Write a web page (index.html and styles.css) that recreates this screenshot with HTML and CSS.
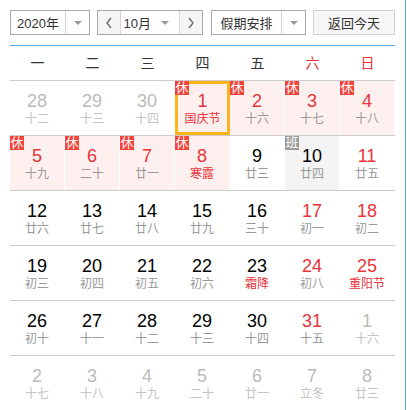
FILE: index.html
```html
<!DOCTYPE html>
<html lang="zh">
<head>
<meta charset="utf-8">
<link rel="stylesheet" href="styles.css">
</head>
<body>
<div class="frame">
  <div class="toolbar">
    <div class="select year">
      <span class="sel-text">2020年</span>
      <span class="sel-arrow"><i class="tri"></i></span>
    </div>
    <div class="month">
      <span class="nav"><svg width="8" height="12" viewBox="0 0 8 12"><path d="M6 1 L2 6 L6 11" fill="none" stroke="#666" stroke-width="1.3"/></svg></span>
      <span class="month-text">10月</span>
      <span class="month-arrow"><i class="tri"></i></span>
      <span class="nav"><svg width="8" height="12" viewBox="0 0 8 12"><path d="M2 1 L6 6 L2 11" fill="none" stroke="#666" stroke-width="1.3"/></svg></span>
    </div>
    <div class="select holiday">
      <span class="sel-text">假期安排</span>
      <span class="sel-arrow"><i class="tri"></i></span>
    </div>
    <div class="today-btn">返回今天</div>
  </div>
  <div class="rule"></div>
  <div class="weekdays">
    <span>一</span><span>二</span><span>三</span><span>四</span><span>五</span><span class="red">六</span><span class="red">日</span>
  </div>
  <div class="grid">
    <div class="row">
      <div class="cell other"><b>28</b><em>十二</em></div>
      <div class="cell other"><b>29</b><em>十三</em></div>
      <div class="cell other"><b>30</b><em>十四</em></div>
      <div class="cell rest selected"><i class="badge">休</i><b class="r">1</b><em class="r">国庆节</em></div>
      <div class="cell rest"><i class="badge">休</i><b class="r">2</b><em>十六</em></div>
      <div class="cell rest"><i class="badge">休</i><b class="r">3</b><em>十七</em></div>
      <div class="cell rest"><i class="badge">休</i><b class="r">4</b><em>十八</em></div>
    </div>
    <div class="row">
      <div class="cell rest"><i class="badge">休</i><b class="r">5</b><em>十九</em></div>
      <div class="cell rest"><i class="badge">休</i><b class="r">6</b><em>二十</em></div>
      <div class="cell rest"><i class="badge">休</i><b class="r">7</b><em>廿一</em></div>
      <div class="cell rest"><i class="badge">休</i><b class="r">8</b><em class="r">寒露</em></div>
      <div class="cell"><b>9</b><em>廿三</em></div>
      <div class="cell work"><i class="badge gray">班</i><b>10</b><em>廿四</em></div>
      <div class="cell"><b class="r">11</b><em>廿五</em></div>
    </div>
    <div class="row">
      <div class="cell"><b>12</b><em>廿六</em></div>
      <div class="cell"><b>13</b><em>廿七</em></div>
      <div class="cell"><b>14</b><em>廿八</em></div>
      <div class="cell"><b>15</b><em>廿九</em></div>
      <div class="cell"><b>16</b><em>三十</em></div>
      <div class="cell"><b class="r">17</b><em>初一</em></div>
      <div class="cell"><b class="r">18</b><em>初二</em></div>
    </div>
    <div class="row">
      <div class="cell"><b>19</b><em>初三</em></div>
      <div class="cell"><b>20</b><em>初四</em></div>
      <div class="cell"><b>21</b><em>初五</em></div>
      <div class="cell"><b>22</b><em>初六</em></div>
      <div class="cell"><b>23</b><em class="r">霜降</em></div>
      <div class="cell"><b class="r">24</b><em>初八</em></div>
      <div class="cell"><b class="r">25</b><em class="r">重阳节</em></div>
    </div>
    <div class="row">
      <div class="cell"><b>26</b><em>初十</em></div>
      <div class="cell"><b>27</b><em>十一</em></div>
      <div class="cell"><b>28</b><em>十二</em></div>
      <div class="cell"><b>29</b><em>十三</em></div>
      <div class="cell"><b>30</b><em>十四</em></div>
      <div class="cell"><b class="r">31</b><em>十五</em></div>
      <div class="cell other"><b>1</b><em>十六</em></div>
    </div>
    <div class="row">
      <div class="cell other"><b>2</b><em>十七</em></div>
      <div class="cell other"><b>3</b><em>十八</em></div>
      <div class="cell other"><b>4</b><em>十九</em></div>
      <div class="cell other"><b>5</b><em>二十</em></div>
      <div class="cell other"><b>6</b><em>廿一</em></div>
      <div class="cell other"><b>7</b><em>立冬</em></div>
      <div class="cell other"><b>8</b><em>廿三</em></div>
    </div>
  </div>
</div>
</body>
</html>
```

FILE: styles.css
```css
html, body {
  margin: 0;
  padding: 0;
  background: #fff;
  overflow: hidden;
}
body {
  font-family: "Liberation Sans", "Noto Sans CJK SC", sans-serif;
  color: #333;
}
.frame {
  width: 385px;
  height: 400px;
  padding: 10px 10px 0 10px;
  border-right: 1px solid #5aaaf2;
}
.toolbar {
  display: flex;
  height: 25px;
  font-size: 13px;
}
.select, .month, .today-btn {
  box-sizing: border-box;
  height: 25px;
  border: 1px solid #a8a8a8;
  display: flex;
  align-items: stretch;
  background: #fff;
}
.year { width: 80px; }
.holiday { width: 95px; margin-left: 8px; }
.month { width: 106px; margin-left: 7px; }
.today-btn {
  width: 82px;
  margin-left: 7px;
  border-color: #d2d2d2;
  background: #f6f6f6;
  justify-content: center;
  align-items: center;
  color: #333;
}
.sel-text {
  flex: 1;
  display: flex;
  align-items: center;
  justify-content: center;
  border-right: 1px solid #d6d6d6;
}
.sel-arrow {
  width: 23px;
  display: flex;
  align-items: center;
  justify-content: center;
}
.tri {
  display: block;
  width: 0;
  height: 0;
  border-left: 4px solid transparent;
  border-right: 4px solid transparent;
  border-top: 4px solid #999;
}
.nav {
  width: 22px;
  background: #f5f5f5;
  display: flex;
  align-items: center;
  justify-content: center;
}
.nav:first-child { border-right: 1px solid #d6d6d6; }
.nav:last-child { border-left: 1px solid #d6d6d6; }
.month-text {
  flex: 1;
  display: flex;
  align-items: center;
  justify-content: flex-end;
  padding-right: 10px;
}
.month-arrow {
  width: 18px;
  display: flex;
  align-items: center;
  justify-content: flex-start;
}
.rule {
  margin-top: 10px;
  height: 1px;
  background: #5aaaf2;
}
.weekdays {
  display: grid;
  grid-template-columns: repeat(7, 55px);
  height: 34px;
  line-height: 34px;
  text-align: center;
  font-size: 14px;
  color: #333;
}
.weekdays .red { color: #e8333a; }
.row {
  display: grid;
  grid-template-columns: repeat(7, 55px);
  height: 55px;
  box-sizing: border-box;
  border-top: 1px solid #cccccc;
}
.cell {
  position: relative;
  box-sizing: border-box;
  border-right: 1px solid #fff;
  padding-top: 9px;
  text-align: center;
}
.cell b {
  display: block;
  font-weight: normal;
  font-size: 18px;
  line-height: 22px;
  color: #000;
}
.cell em {
  display: block;
  font-style: normal;
  font-size: 12px;
  line-height: 14px;
  color: #999;
}
.cell b.r, .cell em.r { color: #e8333a; }
.cell.other b { color: #bbb; }
.cell.other em { color: #c4c4c4; }
.cell.rest { background: #fff0f0; }
.cell.work { background: #f4f4f4; }
.cell.selected {
  border: 3px solid #fdb51e;
  padding-top: 6px;
}
.badge {
  position: absolute;
  left: 0;
  top: 0;
  width: 14px;
  height: 14px;
  line-height: 14px;
  font-size: 13px;
  font-style: normal;
  color: #fff;
  background: #f4433a;
  text-align: center;
  overflow: hidden;
}
.cell.selected .badge { left: -3px; top: -3px; }
.badge.gray { background: #9a9a9a; }
```
